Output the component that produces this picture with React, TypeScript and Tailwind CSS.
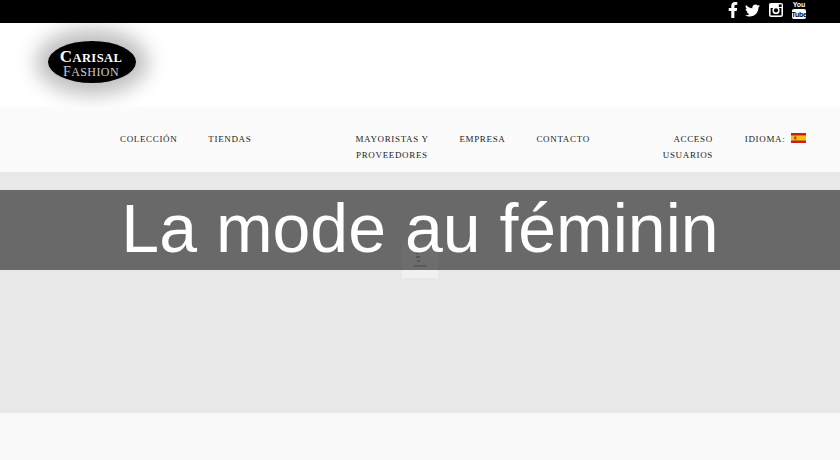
import { FaFacebookF, FaTwitter } from "react-icons/fa";

function InstagramIcon() {
  return (
    <svg width="14" height="14" viewBox="0 0 14 14" fill="none">
      <rect x="0" y="0" width="14" height="14" rx="2" fill="#fff" />
      <rect x="1.6" y="5" width="10.8" height="7.4" fill="#000" />
      <circle cx="7" cy="7.4" r="3.6" fill="#fff" />
      <circle cx="7" cy="7.4" r="2.1" fill="#000" />
      <rect x="9.8" y="1.4" width="2.8" height="2.6" fill="#000" />
    </svg>
  );
}

function YoutubeIcon() {
  return (
    <div className="flex w-[14px] flex-col items-center">
      <span className="text-[7px] leading-[8px] font-bold text-white font-['Liberation_Sans',sans-serif]">You</span>
      <span className="flex h-[10px] w-[14px] items-center justify-center rounded-[2px] bg-white text-[7px] leading-none font-bold tracking-[-0.3px] text-black font-['Liberation_Sans',sans-serif]">
        Tube
      </span>
    </div>
  );
}

function SpainFlag() {
  return (
    <svg width="15" height="10" viewBox="0 0 15 10" className="ml-[6px] mb-[4px] inline-block align-middle">
      <rect width="15" height="10" fill="#c8201c" />
      <rect y="2.5" width="15" height="5" fill="#f4c20d" />
      <rect x="3" y="3.5" width="2.5" height="3" fill="#b5561f" />
    </svg>
  );
}

function Logo() {
  return (
    <div className="flex h-[42px] w-[88px] flex-col items-center justify-center rounded-[50%] bg-black pt-[3px] pr-[2px] text-white shadow-[0_0_20px_12px_rgba(0,0,0,0.26)] font-['Liberation_Serif',serif]">
      <span className="text-[12.5px] leading-[15px] font-bold tracking-[0.4px]">
        <span className="text-[17px] leading-[15px]">C</span>ARISAL
      </span>
      <span className="text-[12px] leading-[11px] tracking-[0.4px] text-[#ccc]">
        <span className="text-[14px] leading-[11px]">F</span>ASHION
      </span>
    </div>
  );
}

function NavItem({ className = "", children }: { className?: string; children: React.ReactNode }) {
  return <div className={`leading-[16px] ${className}`}>{children}</div>;
}

export default function App() {
  return (
    <div className="flex h-[460px] w-[840px] flex-col overflow-hidden bg-white">
      <div className="flex h-[23px] shrink-0 items-center justify-end gap-[9px] bg-black pr-[34px] pb-[3px]">
        <FaFacebookF className="mr-[-5px] text-white" size={16} />
        <FaTwitter className="text-white" size={15} />
        <InstagramIcon />
        <YoutubeIcon />
      </div>

      <div className="flex h-[84px] shrink-0 items-center bg-white pb-[7px] pl-[48px]">
        <Logo />
      </div>

      <nav className="flex h-[65px] shrink-0 items-start bg-[#fbfbfb] pt-[24px] pl-[120px] text-[9px] tracking-[0.65px] text-[#222] font-['Liberation_Serif',serif]">
        <NavItem className="mr-[31px]">COLECCIÓN</NavItem>
        <NavItem className="mr-[104px]">TIENDAS</NavItem>
        <NavItem className="mr-[31px] w-[73px] whitespace-nowrap text-center">
          MAYORISTAS Y
          <br />
          PROVEEDORES
        </NavItem>
        <NavItem className="mr-[31px]">EMPRESA</NavItem>
        <NavItem className="mr-[73px]">CONTACTO</NavItem>
        <NavItem className="mr-[32px] w-[50px] whitespace-nowrap text-right">
          ACCESO
          <br />
          USUARIOS
        </NavItem>
        <NavItem className="whitespace-nowrap">
          IDIOMA:
          <SpainFlag />
        </NavItem>
      </nav>

      <main className="relative flex h-[241px] shrink-0 justify-center bg-[#e8e8e8] pt-[70px]">
        <div className="flex h-[36px] w-[36px] items-center justify-center bg-[#f1f1f1]">
          <svg width="20" height="20" viewBox="0 0 20 20" fill="#bbb">
            <rect x="6" y="2" width="3" height="2" />
            <rect x="6" y="6" width="4" height="2" />
            <rect x="7" y="10" width="3" height="2" />
            <rect x="4" y="15" width="12" height="1.5" />
          </svg>
        </div>
        <div className="absolute top-[18px] right-0 left-0 flex h-[80px] items-center justify-center bg-black/[.55] pb-[3px]">
          <h1 className="text-[68px] leading-[77px] font-normal text-white font-['Liberation_Sans',sans-serif]">
            La mode au féminin
          </h1>
        </div>
      </main>

      <footer className="flex-1 bg-[#f9f9f9]" />
    </div>
  );
}
